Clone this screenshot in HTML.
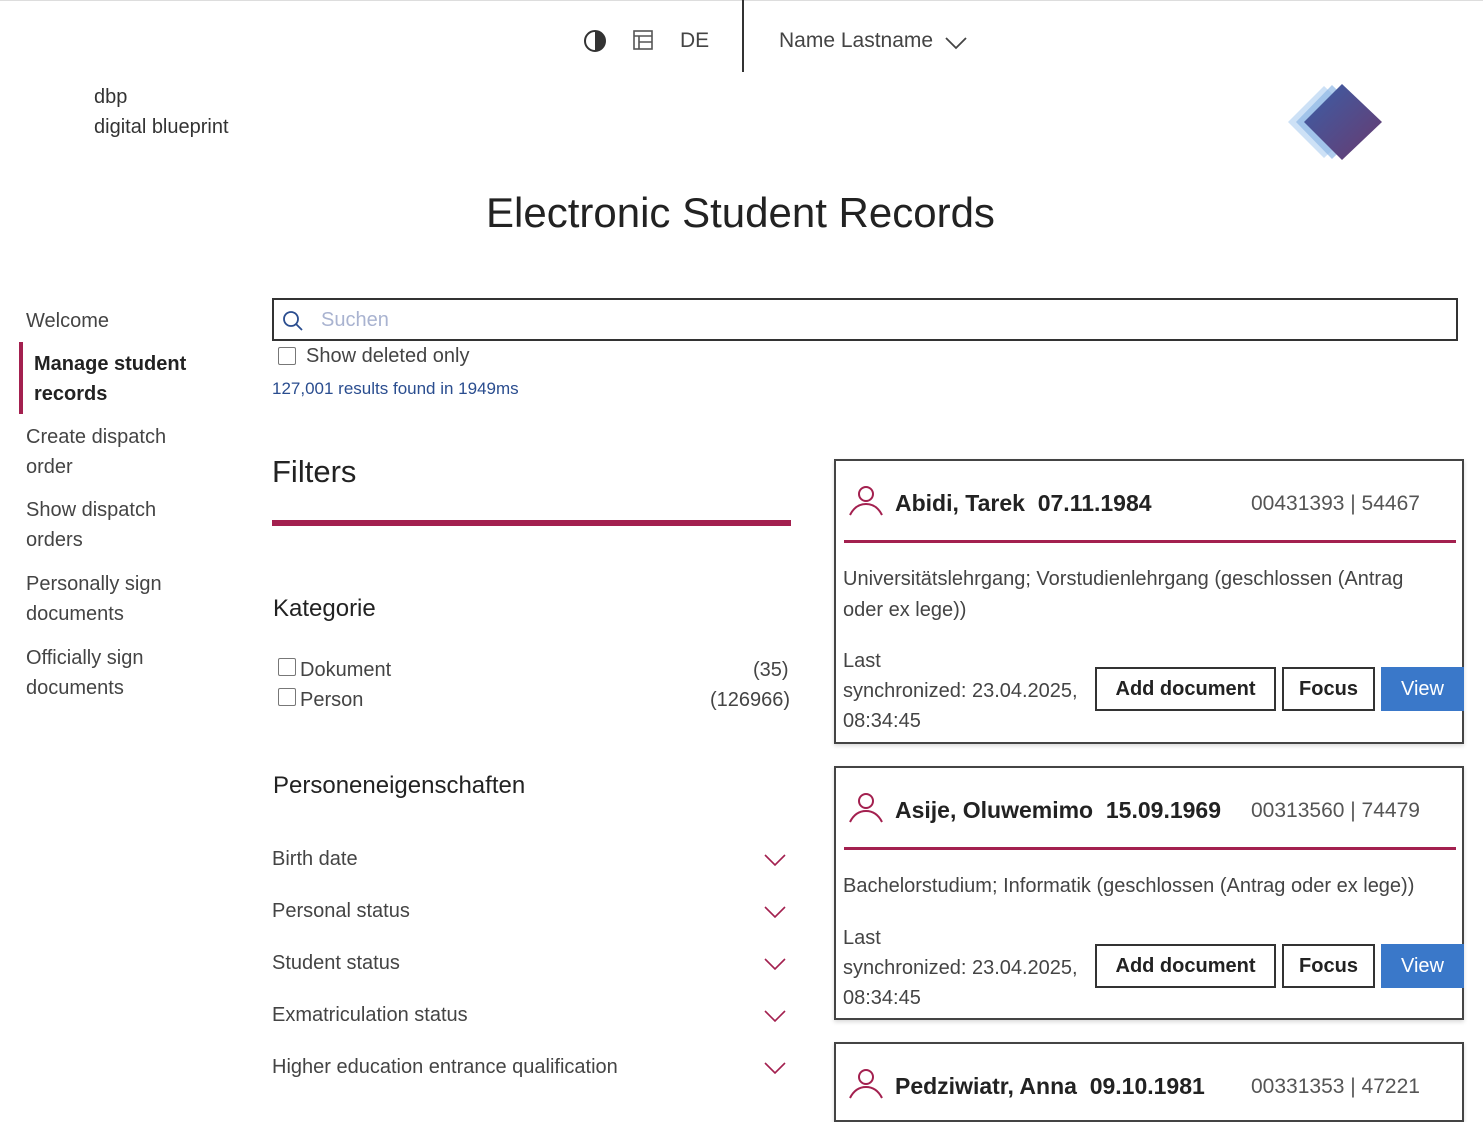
<!DOCTYPE html>
<html><head><meta charset="utf-8"><style>
body{margin:0;width:1483px;height:1096px;overflow:hidden;background:#fff;font-family:"Liberation Sans",sans-serif;color:#333;position:relative}
.a{position:absolute;white-space:nowrap}
.nav{font-size:20px;color:#444;line-height:30px}
.card{position:absolute;left:834px;width:630px;border:2px solid #444;box-sizing:border-box;background:#fff;box-shadow:0 2px 4px rgba(0,0,0,.15)}
.line{position:absolute;left:8px;right:6px;height:3px;background:#a3204f}
.btn{position:absolute;height:44px;box-sizing:border-box;border:2px solid #333;font-size:20px;font-weight:bold;color:#222;display:flex;align-items:center;justify-content:center;background:#fff}
.view{background:#3a78c9;border-color:#3a78c9;color:#fff;font-weight:normal}
.fl{font-size:20px;color:#444}
.chev{position:absolute;left:764px;width:22px;height:12px}
</style></head><body>
<div class="a" style="left:0;top:0;width:1483px;height:1px;background:#ddd"></div>
<svg class="a" style="left:583px;top:29px" width="24" height="24" viewBox="0 0 24 24"><circle cx="12" cy="12" r="10" fill="none" stroke="#333" stroke-width="2"/><path d="M12 2a10 10 0 0 1 0 20z" fill="#333"/></svg>
<svg class="a" style="left:632px;top:29px" width="22" height="22" viewBox="0 0 22 22" fill="none" stroke="#555" stroke-width="1.6"><rect x="2" y="2" width="18" height="18"/><path d="M2 7h18M7 7v13M7 13h13"/></svg>
<div class="a" style="left:680px;top:29px;font-size:21px;color:#444">DE</div>
<div class="a" style="left:742px;top:0;width:2px;height:72px;background:#333"></div>
<div class="a" style="left:779px;top:29px;font-size:21px;color:#444">Name Lastname</div>
<svg class="a" style="left:945px;top:36px" width="22" height="14" viewBox="0 0 22 14"><path d="M1 2l10 10 10-10" fill="none" stroke="#444" stroke-width="1.8"/></svg>
<div class="a" style="left:94px;top:82px;font-size:20px;color:#333;line-height:30px">dbp<br>digital blueprint</div>
<svg class="a" style="left:1288px;top:82px" width="96" height="80" viewBox="0 0 96 80">
<defs><linearGradient id="g" x1="0" y1="0" x2="1" y2="1"><stop offset="0" stop-color="#3a5fa8"/><stop offset="1" stop-color="#6a3a6e"/></linearGradient></defs>
<polygon points="36,4 74,40 36,76 0,40" fill="#b8d4f2" opacity=".7"/>
<polygon points="44,3 82,40 44,77 8,40" fill="#8fb8e6" opacity=".7"/>
<polygon points="54,2 94,40 54,78 16,40" fill="url(#g)"/>
</svg>
<div class="a" style="left:486px;top:189px;font-size:42px;color:#222">Electronic Student Records</div>

<div class="a nav" style="left:26px;top:306px">Welcome</div>
<div class="a" style="left:19px;top:342px;width:4px;height:72px;background:#a3204f"></div>
<div class="a nav" style="left:34px;top:349px;font-weight:bold;color:#222">Manage student<br>records</div>
<div class="a nav" style="left:26px;top:422px">Create dispatch<br>order</div>
<div class="a nav" style="left:26px;top:495px">Show dispatch<br>orders</div>
<div class="a nav" style="left:26px;top:569px">Personally sign<br>documents</div>
<div class="a nav" style="left:26px;top:643px">Officially sign<br>documents</div>

<div class="a" style="left:272px;top:298px;width:1186px;height:43px;border:2px solid #333;box-sizing:border-box"></div>
<svg class="a" style="left:282px;top:310px" width="22" height="22" viewBox="0 0 22 22"><circle cx="9" cy="9" r="7" fill="none" stroke="#2a4d8f" stroke-width="1.8"/><path d="M14 14l6 6" stroke="#2a4d8f" stroke-width="1.8"/></svg>
<div class="a" style="left:321px;top:309px;font-size:20px;color:#a9b3d0">Suchen</div>
<div class="a" style="left:278px;top:347px;width:18px;height:18px;border:1.5px solid #777;border-radius:2px;box-sizing:border-box"></div>
<div class="a" style="left:306px;top:345px;font-size:20px;color:#444">Show deleted only</div>
<div class="a" style="left:272px;top:379px;font-size:17px;color:#2a4d8f">127,001 results found in 1949ms</div>

<div class="a" style="left:272px;top:454px;font-size:31px;color:#222">Filters</div>
<div class="a" style="left:272px;top:520px;width:519px;height:6px;background:#a3204f"></div>
<div class="a" style="left:273px;top:595px;font-size:24px;color:#222">Kategorie</div>
<div class="a" style="left:278px;top:658px;width:18px;height:18px;border:1.5px solid #777;border-radius:2px;box-sizing:border-box"></div>
<div class="a fl" style="left:300px;top:659px">Dokument</div>
<div class="a fl" style="left:753px;top:659px">(35)</div>
<div class="a" style="left:278px;top:688px;width:18px;height:18px;border:1.5px solid #777;border-radius:2px;box-sizing:border-box"></div>
<div class="a fl" style="left:300px;top:689px">Person</div>
<div class="a fl" style="left:710px;top:689px">(126966)</div>
<div class="a" style="left:273px;top:772px;font-size:24px;color:#222">Personeneigenschaften</div>
<div class="a fl" style="left:272px;top:848px">Birth date</div>
<div class="a fl" style="left:272px;top:900px">Personal status</div>
<div class="a fl" style="left:272px;top:952px">Student status</div>
<div class="a fl" style="left:272px;top:1004px">Exmatriculation status</div>
<div class="a fl" style="left:272px;top:1056px">Higher education entrance qualification</div>
<svg class="chev" style="top:854px" viewBox="0 0 22 12"><path d="M1 1l10 10 10-10" fill="none" stroke="#a3204f" stroke-width="1.6"/></svg>
<svg class="chev" style="top:906px" viewBox="0 0 22 12"><path d="M1 1l10 10 10-10" fill="none" stroke="#a3204f" stroke-width="1.6"/></svg>
<svg class="chev" style="top:958px" viewBox="0 0 22 12"><path d="M1 1l10 10 10-10" fill="none" stroke="#a3204f" stroke-width="1.6"/></svg>
<svg class="chev" style="top:1010px" viewBox="0 0 22 12"><path d="M1 1l10 10 10-10" fill="none" stroke="#a3204f" stroke-width="1.6"/></svg>
<svg class="chev" style="top:1062px" viewBox="0 0 22 12"><path d="M1 1l10 10 10-10" fill="none" stroke="#a3204f" stroke-width="1.6"/></svg>

<div class="card" style="top:459px;height:285px">
<svg class="a" style="left:12px;top:24px" width="36" height="32" viewBox="0 0 36 32"><circle cx="18" cy="9" r="7" fill="none" stroke="#a3204f" stroke-width="2"/><path d="M2 30c4-8 10-11 16-11s12 3 16 11" fill="none" stroke="#a3204f" stroke-width="2"/></svg>
<div class="a" style="left:59px;top:29px;font-size:23px;font-weight:bold;color:#222">Abidi, Tarek&nbsp; 07.11.1984</div>
<div class="a" style="left:415px;top:31px;font-size:21px;color:#555">00431393 | 54467</div>
<div class="line" style="top:79px"></div>
<div class="a" style="left:7px;top:103px;font-size:20px;color:#444;line-height:31px">Universitätslehrgang; Vorstudienlehrgang (geschlossen (Antrag<br>oder ex lege))</div>
<div class="a" style="left:7px;top:185px;font-size:20px;color:#444;line-height:30px">Last<br>synchronized: 23.04.2025,<br>08:34:45</div>
<div class="btn" style="left:259px;top:206px;width:181px">Add document</div>
<div class="btn" style="left:446px;top:206px;width:93px">Focus</div>
<div class="btn view" style="left:545px;top:206px;width:83px">View</div>
</div>

<div class="card" style="top:766px;height:254px">
<svg class="a" style="left:12px;top:24px" width="36" height="32" viewBox="0 0 36 32"><circle cx="18" cy="9" r="7" fill="none" stroke="#a3204f" stroke-width="2"/><path d="M2 30c4-8 10-11 16-11s12 3 16 11" fill="none" stroke="#a3204f" stroke-width="2"/></svg>
<div class="a" style="left:59px;top:29px;font-size:23px;font-weight:bold;color:#222">Asije, Oluwemimo&nbsp; 15.09.1969</div>
<div class="a" style="left:415px;top:31px;font-size:21px;color:#555">00313560 | 74479</div>
<div class="line" style="top:79px"></div>
<div class="a" style="left:7px;top:103px;font-size:20px;color:#444;line-height:31px">Bachelorstudium; Informatik (geschlossen (Antrag oder ex lege))</div>
<div class="a" style="left:7px;top:155px;font-size:20px;color:#444;line-height:30px">Last<br>synchronized: 23.04.2025,<br>08:34:45</div>
<div class="btn" style="left:259px;top:176px;width:181px">Add document</div>
<div class="btn" style="left:446px;top:176px;width:93px">Focus</div>
<div class="btn view" style="left:545px;top:176px;width:83px">View</div>
</div>

<div class="card" style="top:1042px;height:80px">
<svg class="a" style="left:12px;top:24px" width="36" height="32" viewBox="0 0 36 32"><circle cx="18" cy="9" r="7" fill="none" stroke="#a3204f" stroke-width="2"/><path d="M2 30c4-8 10-11 16-11s12 3 16 11" fill="none" stroke="#a3204f" stroke-width="2"/></svg>
<div class="a" style="left:59px;top:29px;font-size:23px;font-weight:bold;color:#222">Pedziwiatr, Anna&nbsp; 09.10.1981</div>
<div class="a" style="left:415px;top:31px;font-size:21px;color:#555">00331353 | 47221</div>
</div>
</body></html>
